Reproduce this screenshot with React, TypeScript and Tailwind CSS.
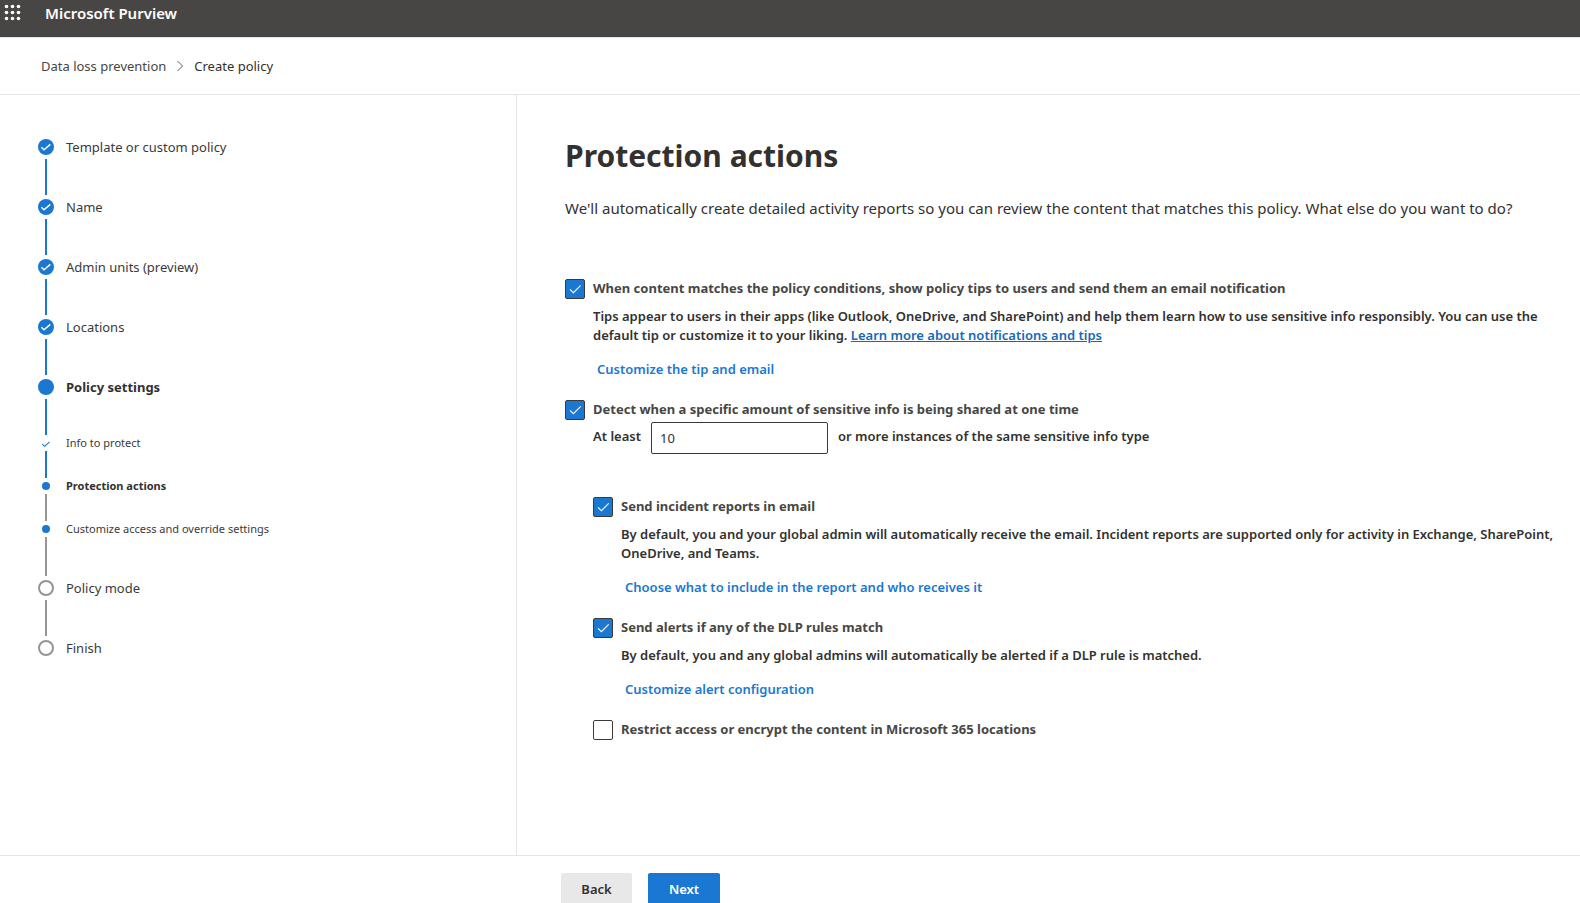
import { useId, useState, type ReactNode } from "react";

type MainStep = { label: string; state: "done" | "current" | "todo"; line?: "h-9"; color?: string };
type SubStep = { label: string; state: "done" | "current" | "next"; line: "h-[27px]" | "h-[39px]"; color: string };

const BLUE = "bg-[#1a78d2]";
const GREY = "bg-[#979593]";

const completed: MainStep[] = [
  { label: "Template or custom policy", state: "done", line: "h-9", color: BLUE },
  { label: "Name", state: "done", line: "h-9", color: BLUE },
  { label: "Admin units (preview)", state: "done", line: "h-9", color: BLUE },
  { label: "Locations", state: "done", line: "h-9", color: BLUE },
  { label: "Policy settings", state: "current", line: "h-9", color: BLUE },
];

const settings: SubStep[] = [
  { label: "Info to protect", state: "done", line: "h-[27px]", color: BLUE },
  { label: "Protection actions", state: "current", line: "h-[27px]", color: GREY },
  { label: "Customize access and override settings", state: "next", line: "h-[39px]", color: GREY },
];

const remaining: MainStep[] = [
  { label: "Policy mode", state: "todo", line: "h-9", color: GREY },
  { label: "Finish", state: "todo" },
];

function Connector({ height, color }: { height: string; color?: string }) {
  return (
    <div className="flex w-4 justify-center">
      <div className={`w-0.5 ${height} ${color}`} />
    </div>
  );
}

function StepRow({ step }: { step: MainStep }) {
  return (
    <li>
      <div className="flex h-6 items-center gap-3">
        {step.state === "done" && (
          <svg className="size-4 shrink-0" viewBox="0 0 16 16" aria-hidden="true">
            <circle cx="8" cy="8" r="8" fill="#1a78d2" />
            <path d="M3.4 8.2l2.6 2.6 6.3-5.4" fill="none" stroke="#fff" strokeWidth="1.4" />
          </svg>
        )}
        {step.state === "current" && <span className="size-4 shrink-0 rounded-full bg-[#1a78d2]" />}
        {step.state === "todo" && (
          <span className="size-4 shrink-0 rounded-full border-2 border-[#979593] bg-white" />
        )}
        <span
          className={
            step.state === "current"
              ? "text-[13px] leading-5 font-bold text-[#323130]"
              : "text-[13px] leading-5 text-[#3b3a39]"
          }
        >
          {step.label}
        </span>
      </div>
      {step.line && <Connector height={step.line} color={step.color} />}
    </li>
  );
}

function SubStepRow({ step }: { step: SubStep }) {
  return (
    <li>
      <div className="flex h-4 items-center gap-3">
        <span className="flex w-4 shrink-0 justify-center">
          {step.state === "done" ? (
            <svg className="size-2" viewBox="0 0 8 8" aria-hidden="true">
              <path d="M.3 5.2l2.4 2.1L7.6 2.8" fill="none" stroke="#1a78d2" strokeWidth="1.1" />
            </svg>
          ) : (
            <span className="size-2 rounded-full bg-[#1a78d2]" />
          )}
        </span>
        <span
          className={
            step.state === "current"
              ? "text-[11px] leading-4 font-bold text-[#323130]"
              : "text-[11px] leading-4 text-[#3b3a39]"
          }
        >
          {step.label}
        </span>
      </div>
      <Connector height={step.line} color={step.color} />
    </li>
  );
}

function Option({ label, initial, children }: { label: string; initial: boolean; children?: ReactNode }) {
  const id = useId();
  const [checked, setChecked] = useState(initial);
  return (
    <div>
      <div className="flex gap-2">
        <span className="relative size-5 shrink-0">
          <input
            id={id}
            type="checkbox"
            checked={checked}
            onChange={(e) => setChecked(e.target.checked)}
            className="block size-5 appearance-none rounded-xs border border-[#3b3a39] bg-white checked:bg-[#1a78d2]"
          />
          {checked && (
            <svg className="pointer-events-none absolute inset-0 size-5" viewBox="0 0 20 20" aria-hidden="true">
              <path d="M5 10.4l3.4 3.3 7.3-7.4" fill="none" stroke="#fff" strokeWidth="1.1" />
            </svg>
          )}
        </span>
        <label htmlFor={id} className="text-[13px] leading-[19px] font-bold text-[#484644]">
          {label}
        </label>
      </div>
      <div className="pl-7">{children}</div>
    </div>
  );
}

function Details({ children }: { children: ReactNode }) {
  return <p className="mt-2 text-[13px] leading-[19px] font-semibold text-[#323130]">{children}</p>;
}

function Action({ children }: { children: ReactNode }) {
  return (
    <button type="button" className="mt-2 mb-[15px] block h-8 px-1 text-[13px] leading-[19px] font-semibold text-[#1a78d2]">
      {children}
    </button>
  );
}

export default function App() {
  const [count, setCount] = useState("10");
  return (
    <div className="flex h-screen flex-col overflow-hidden bg-white font-['Noto_Sans',sans-serif] text-[#323130]">
      <header className="flex h-[38px] shrink-0 items-start gap-6 border-b border-[#e5e5e5] bg-[#484644] pl-1">
        <button type="button" aria-label="App launcher" className="pt-1">
          <svg className="size-[17px]" viewBox="0 0 17 17" fill="#fff" aria-hidden="true">
            {[2.5, 8.5, 14.5].map((y) =>
              [2.5, 8.5, 14.5].map((x) => <circle key={`${x}-${y}`} cx={x} cy={y} r="1.8" />),
            )}
          </svg>
        </button>
        <span className="pt-0.5 text-[15px] leading-[22px] font-semibold text-white">Microsoft Purview</span>
      </header>

      <nav aria-label="Breadcrumb" className="flex h-[57px] shrink-0 items-center gap-[9px] border-b border-[#e5e5e5] pl-[41px] text-[13px] leading-5">
        <a href="#dlp" className="text-[#484644]">Data loss prevention</a>
        <svg className="h-3 w-2.5" viewBox="0 0 10 12" aria-hidden="true">
          <path d="M2.5 1l5 5-5 5" fill="none" stroke="#605e5c" strokeWidth="1" />
        </svg>
        <span>Create policy</span>
      </nav>

      <div className="flex min-h-0 flex-1">
        <aside className="w-[517px] shrink-0 border-r border-[#e5e5e5] pt-10 pl-[38px]">
          <ol>
            {completed.map((s) => (
              <StepRow key={s.label} step={s} />
            ))}
            <li>
              <ol>
                {settings.map((s) => (
                  <SubStepRow key={s.label} step={s} />
                ))}
              </ol>
            </li>
            {remaining.map((s) => (
              <StepRow key={s.label} step={s} />
            ))}
          </ol>
        </aside>

        <main className="min-w-0 flex-1 overflow-hidden pt-[41px] pr-5 pl-12">
          <h1 className="text-[30px] leading-10 font-bold">Protection actions</h1>
          <p className="mt-[22px] text-[15px] leading-5">
            We'll automatically create detailed activity reports so you can review the content that matches this policy. What else do you want to do?
          </p>

          <div className="mt-[61px]">
            <Option
              initial
              label="When content matches the policy conditions, show policy tips to users and send them an email notification"
            >
              <Details>
                Tips appear to users in their apps (like Outlook, OneDrive, and SharePoint) and help them learn how to use sensitive info responsibly. You can use the default tip or customize it to your liking.{" "}
                <a href="#learn" className="text-[#1569b9] underline">Learn more about notifications and tips</a>
              </Details>
              <Action>Customize the tip and email</Action>
            </Option>

            <Option initial label="Detect when a specific amount of sensitive info is being shared at one time">
              <div className="mt-0.5 mb-[43px] flex items-start gap-2.5 text-[13px] leading-[19px] font-semibold">
                <label htmlFor="instances" className="pt-[5px]">At least</label>
                <input
                  id="instances"
                  type="text"
                  value={count}
                  onChange={(e) => setCount(e.target.value)}
                  className="h-8 w-[177px] rounded-xs border border-[#3b3a39] px-2 font-normal"
                />
                <span className="pt-[5px]">or more instances of the same sensitive info type</span>
              </div>
              <Option initial label="Send incident reports in email">
                <Details>
                  By default, you and your global admin will automatically receive the email. Incident reports are supported only for activity in Exchange, SharePoint, OneDrive, and Teams.
                </Details>
                <Action>Choose what to include in the report and who receives it</Action>
              </Option>
              <Option initial label="Send alerts if any of the DLP rules match">
                <Details>By default, you and any global admins will automatically be alerted if a DLP rule is matched.</Details>
                <Action>Customize alert configuration</Action>
              </Option>
              <Option initial={false} label="Restrict access or encrypt the content in Microsoft 365 locations" />
            </Option>
          </div>
        </main>
      </div>

      <footer className="flex h-12 shrink-0 gap-4 border-t border-[#e5e5e5] pt-[17px] pl-[561px]">
        <button type="button" className="h-[34px] min-w-[71px] shrink-0 rounded-xs bg-[#e8e8e8] px-4 text-[13px] font-semibold">
          Back
        </button>
        <button type="button" className="h-[34px] min-w-[72px] shrink-0 rounded-xs bg-[#1a78d2] px-4 text-[13px] font-semibold text-white">
          Next
        </button>
      </footer>
    </div>
  );
}
